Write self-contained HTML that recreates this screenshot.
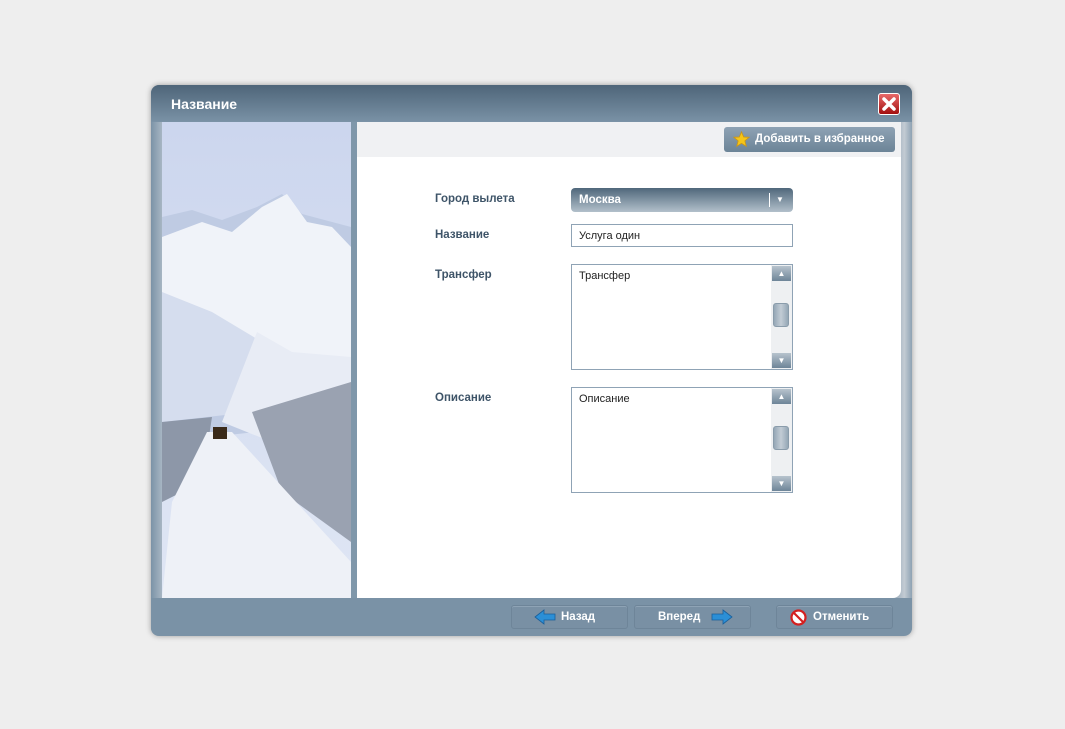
<!DOCTYPE html>
<html><head><meta charset="utf-8"><style>
*{margin:0;padding:0;box-sizing:border-box}
body{width:1065px;height:729px;background:#eeeeee;font-family:"Liberation Sans","DejaVu Sans",sans-serif;position:relative;overflow:hidden}
.win{position:absolute;left:151px;top:85px;width:761px;height:551px;border-radius:8px;background:linear-gradient(90deg,#7b93a7 0%,#a9b7c4 1.5%,#7f97aa 2%,#7f97aa 97%,#c3cbd3 99%,#8ea2b3 100%);box-shadow:0 0 6px rgba(0,0,0,.35)}
.title{position:absolute;left:0;top:0;width:100%;height:37px;border-radius:8px 8px 0 0;background:linear-gradient(#4e6579,#7a92a6)}
.title span{position:absolute;left:20px;top:11px;color:#fff;font-weight:bold;font-size:14px}
.close{position:absolute;left:727px;top:8px;width:22px;height:22px;border-radius:3px;background:linear-gradient(#e86a6a,#a30f0f);border:1px solid #fff}
.bot{position:absolute;left:0;top:513px;width:100%;height:38px;background:#7a92a6;border-radius:0 0 8px 8px}
.img{position:absolute;left:11px;top:37px;width:189px;height:476px;overflow:hidden}
.content{position:absolute;left:206px;top:37px;width:544px;height:476px;background:#fff;border-radius:0 0 8px 0;overflow:hidden}
.strip{height:35px;background:#f0f1f3}
.fav{position:absolute;left:367px;top:5px;width:171px;height:25px;border-radius:3px;background:linear-gradient(#8ea2b4,#6c8497);color:#fff;font-weight:bold;font-size:11.5px;line-height:25px;padding-left:31px}
.lbl{position:absolute;left:78px;color:#3e5468;font-weight:bold;font-size:11.5px}
.sel{position:absolute;left:214px;top:66px;width:222px;height:24px;border-radius:4px;background:linear-gradient(#4f677b,#b2c0cb);color:#fff;font-weight:bold;font-size:11.5px;line-height:24px;padding-left:8px}
.inp{position:absolute;left:214px;border:1px solid #8fa3b5;font-size:11px;color:#222;padding:5px 7px;width:222px}
.sb{position:absolute;right:0;top:0;width:21px;height:100%;background:#eef0f2}
.sbb{position:absolute;left:1px;width:19px;height:15px;background:linear-gradient(#b7c3cd,#6e8598);color:#fff;font-size:8px;text-align:center;line-height:15px}
.thumb{position:absolute;left:2px;width:16px;height:24px;border-radius:3px;background:linear-gradient(90deg,#95a7b6,#c2ccd5,#95a7b6);border:1px solid #8a9cab}
.btn{position:absolute;top:520px;height:24px;border-radius:3px;background:#7990a4;border:1px solid #6e8599;box-shadow:inset 0 1px 0 #8ea3b5;color:#fff;font-weight:bold;font-size:11.5px;line-height:22px}
.btn svg{position:absolute;top:3px}
</style></head><body>
<div class="win">
 <div class="title"><span>Название</span><div class="close"><svg width="20" height="20" viewBox="0 0 20 20"><path d="M5 5L15 15M15 5L5 15" stroke="#fff" stroke-width="3.5" stroke-linecap="round"/></svg></div></div>
 <div class="bot"></div>
 <div class="img"><svg width="189" height="476" viewBox="0 0 189 476">
  <defs><linearGradient id="s" x1="0" y1="0" x2="0" y2="1"><stop offset="0" stop-color="#ccd6ee"/><stop offset="1" stop-color="#dfe6f4"/></linearGradient></defs>
  <rect width="189" height="476" fill="url(#s)"/>
  <polygon points="0,95 30,88 60,98 95,85 120,72 140,92 189,105 189,300 0,320" fill="#bfcbe3"/>
  <polygon points="0,115 40,100 70,110 100,85 125,72 145,100 170,105 189,125 189,240 120,230 40,250 0,270" fill="#f0f3f9"/>
  <polygon points="0,170 50,190 100,220 120,250 90,290 0,300" fill="#d5ddee"/>
  <polygon points="60,300 95,210 130,230 189,235 189,330 110,320" fill="#e8ecf5"/>
  <polygon points="90,290 189,260 189,420 120,370" fill="#9aa2b1"/>
  <polygon points="0,300 50,295 40,360 0,380" fill="#8d97a8"/>
  <polygon points="45,310 70,310 189,440 189,476 0,476 10,380" fill="#eef1f7"/>
  <rect x="51" y="305" width="14" height="12" fill="#3a2a1a"/>
 </svg></div>
 <div class="content">
  <div class="strip"></div>
  <div class="fav"><svg style="position:absolute;left:9px;top:4px" width="17" height="17" viewBox="0 0 20 20"><polygon points="10,1 12.6,7 19,7.4 14,11.6 15.6,18 10,14.5 4.4,18 6,11.6 1,7.4 7.4,7" fill="#f5c518" stroke="#c9961a"/></svg>Добавить в избранное</div>
  <div class="lbl" style="top:71px">Город вылета</div>
  <div class="sel">Москва<span style="position:absolute;left:198px;top:5px;width:1px;height:14px;background:#fff"></span><span style="position:absolute;left:205px;top:0;font-size:8px">▼</span></div>
  <div class="lbl" style="top:107px">Название</div>
  <div class="inp" style="top:102px;height:23px">Услуга один</div>
  <div class="lbl" style="top:147px">Трансфер</div>
  <div class="inp" style="top:142px;height:106px">Трансфер
   <div class="sb"><div class="sbb" style="top:1px">▲</div><div class="thumb" style="top:38px"></div><div class="sbb" style="bottom:1px">▼</div></div></div>
  <div class="lbl" style="top:270px">Описание</div>
  <div class="inp" style="top:265px;height:106px">Описание
   <div class="sb"><div class="sbb" style="top:1px">▲</div><div class="thumb" style="top:38px"></div><div class="sbb" style="bottom:1px">▼</div></div></div>
 </div>
 <div class="btn" style="left:360px;width:117px;padding-left:49px"><svg style="left:22px" width="22" height="16" viewBox="0 0 22 16"><path d="M1 8L10 1V5H21V11H10V15Z" fill="#2b8fd6" stroke="#1a5f9a" stroke-width=".8"/></svg>Назад</div>
 <div class="btn" style="left:483px;width:117px;padding-left:23px">Вперед<svg style="left:76px" width="22" height="16" viewBox="0 0 22 16"><path d="M21 8L12 1V5H1V11H12V15Z" fill="#2b8fd6" stroke="#1a5f9a" stroke-width=".8"/></svg></div>
 <div class="btn" style="left:625px;width:117px;padding-left:36px"><svg style="left:13px;top:3px" width="17" height="17" viewBox="0 0 17 17"><circle cx="8.5" cy="8.5" r="7" fill="#fff" stroke="#d42020" stroke-width="2.2"/><path d="M4 4L13 13" stroke="#d42020" stroke-width="2.2"/></svg>Отменить</div>
</div>
</body></html>
